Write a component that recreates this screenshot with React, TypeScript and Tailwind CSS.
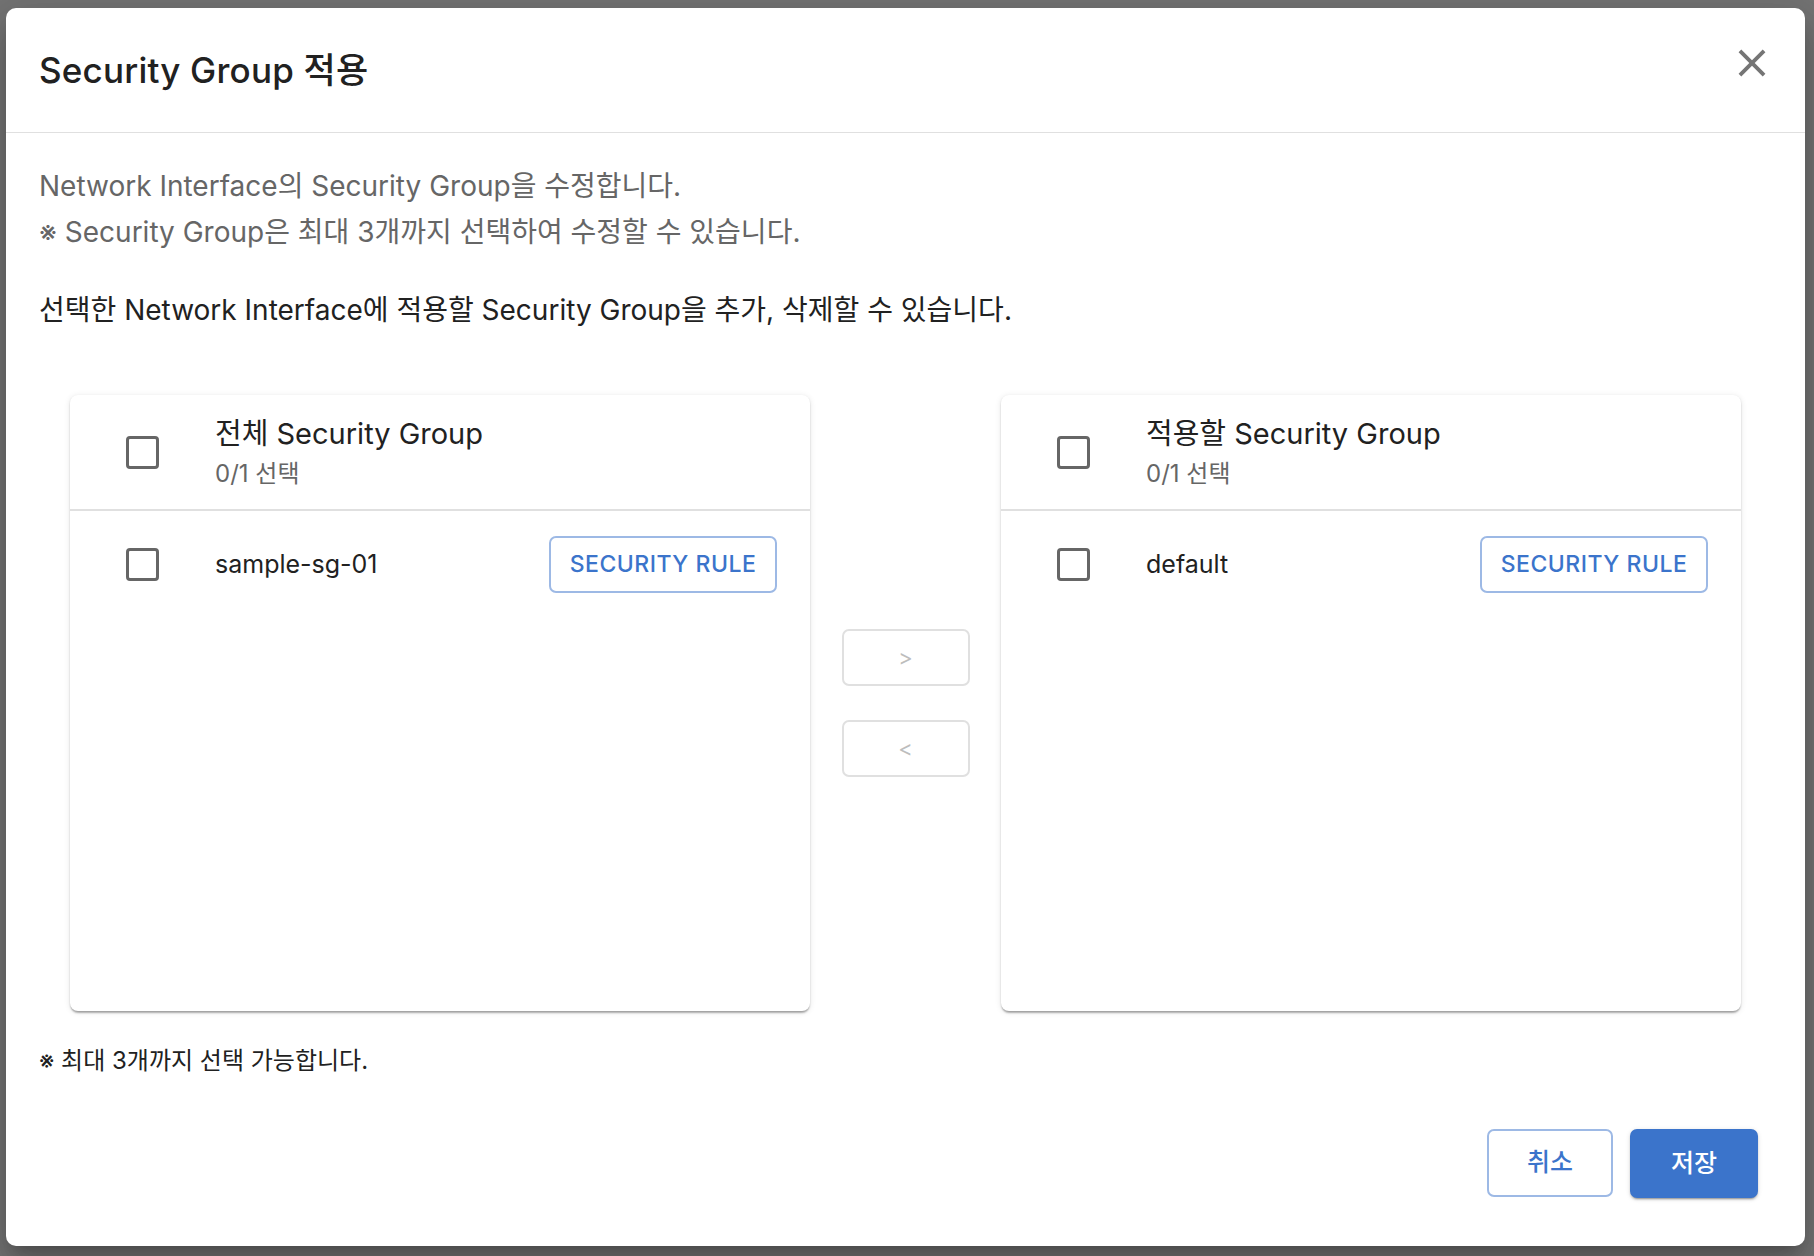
import React, { useState } from 'react';

type Item = { id: string; name: string };

function Box({ checked, onClick }: { checked?: boolean; onClick?: () => void }) {
  return (
    <button
      onClick={onClick}
      className={`w-[33px] h-[33px] shrink-0 rounded-[4px] border-[3.5px] flex items-center justify-center ${
        checked ? 'border-[#3b74cb] bg-[#3b74cb]' : 'border-[#666666] bg-white'
      }`}
    >
      {checked && (
        <svg width="24" height="24" viewBox="0 0 24 24" fill="none" stroke="white" strokeWidth="3.5">
          <polyline points="4 12 10 18 20 6"></polyline>
        </svg>
      )}
    </button>
  );
}

function GroupCard({ title, items }: { title: string; items: Item[] }) {
  const [picked, setPicked] = useState<string[]>([]);
  const all = items.length > 0 && picked.length === items.length;

  return (
    <div className="w-[740px] h-[616px] shrink-0 bg-white rounded-[8px] shadow-[0_3px_2px_-1px_rgba(0,0,0,0.25),0_1px_2px_0_rgba(0,0,0,0.14),0_1px_6px_0_rgba(0,0,0,0.1)] flex flex-col">
      {/* header */}
      <div className="h-[116px] flex items-center pl-[56px] border-b-2 border-[#e0e0e0]">
        <Box checked={all} onClick={() => setPicked(all ? [] : items.map(i => i.id))} />
        <div className="ml-[56px] flex flex-col">
          <span className="text-[29px] leading-[38px] text-[#212121]">{title}</span>
          <span className="mt-[5px] text-[24px] leading-[32px] text-[#666666]">
            {picked.length}/{items.length} 선택
          </span>
        </div>
      </div>

      {/* rows */}
      {items.map(item => (
        <div key={item.id} className="flex items-center pl-[56px] pr-[33px] py-[25px]">
          <Box
            checked={picked.includes(item.id)}
            onClick={() =>
              setPicked(p => (p.includes(item.id) ? p.filter(x => x !== item.id) : [...p, item.id]))
            }
          />
          <span className="ml-[56px] flex-1 text-[25px] text-[#212121]">{item.name}</span>
          <button className="w-[228px] h-[57px] rounded-[7px] border-2 border-[#9db9e5] text-[#3b74cb] text-[23px] font-medium tracking-[0.5px] flex items-center justify-center">
            SECURITY RULE
          </button>
        </div>
      ))}
    </div>
  );
}

export default function App() {
  return (
    <div className="w-[1814px] h-[1256px] overflow-hidden bg-[#747474] pt-[8px] pl-[6px] font-['Inter','Noto_Sans_CJK_KR',sans-serif]">
      <div className="w-[1799px] h-[1238px] bg-white rounded-[10px] flex flex-col shadow-[0_11px_15px_-7px_rgba(0,0,0,0.2),0_24px_38px_3px_rgba(0,0,0,0.14),0_9px_46px_8px_rgba(0,0,0,0.12)]">
        {/* Title bar */}
        <div className="h-[125px] shrink-0 flex items-center justify-between pl-[33px] pr-[30px] border-b border-[#e0e0e0]">
          <h1 className="text-[35px] font-medium text-[#212121] tracking-[0.2px]">Security Group 적용</h1>
          <button className="mb-[14px] text-[#757575]">
            <svg width="46" height="46" viewBox="0 0 24 24" fill="currentColor">
              <path d="M19 6.41 17.59 5 12 10.59 6.41 5 5 6.41 10.59 12 5 17.59 6.41 19 12 13.41 17.59 19 19 17.59 13.41 12z"></path>
            </svg>
          </button>
        </div>

        {/* Content */}
        <div className="flex-1 flex flex-col px-[33px] pt-[30px]">
          <p className="text-[28px] leading-[46px] text-[#666666]">Network Interface의 Security Group을 수정합니다.</p>
          <p className="text-[28px] leading-[46px] text-[#666666]">※ Security Group은 최대 3개까지 선택하여 수정할 수 있습니다.</p>
          <p className="mt-[32px] text-[28px] leading-[46px] text-[#212121]">
            선택한 Network Interface에 적용할 Security Group을 추가, 삭제할 수 있습니다.
          </p>

          <div className="mt-[62px] mx-[31px] flex">
            <GroupCard title="전체 Security Group" items={[{ id: 'a', name: 'sample-sg-01' }]} />
            <div className="flex-1 flex flex-col items-center justify-center gap-[34px]">
              <button className="w-[128px] h-[57px] rounded-[7px] border-2 border-[#e0e0e0] text-[#bdbdbd] text-[22px]">&gt;</button>
              <button className="w-[128px] h-[57px] rounded-[7px] border-2 border-[#e0e0e0] text-[#bdbdbd] text-[22px]">&lt;</button>
            </div>
            <GroupCard title="적용할 Security Group" items={[{ id: 'b', name: 'default' }]} />
          </div>

          <p className="mt-[32px] text-[24px] leading-[36px] text-[#212121]">※ 최대 3개까지 선택 가능합니다.</p>

          <div className="mt-[50px] pr-[14px] flex justify-end gap-[17px]">
            <button className="w-[126px] h-[68px] rounded-[7px] border-2 border-[#9db9e5] text-[#3b74cb] text-[25px] font-medium">취소</button>
            <button className="w-[128px] h-[69px] rounded-[7px] bg-[#3b74cb] text-white text-[25px] font-medium shadow-[0_3px_1px_-2px_rgba(0,0,0,0.2),0_2px_2px_0_rgba(0,0,0,0.14),0_1px_5px_0_rgba(0,0,0,0.12)]">저장</button>
          </div>
        </div>
      </div>
    </div>
  );
}
